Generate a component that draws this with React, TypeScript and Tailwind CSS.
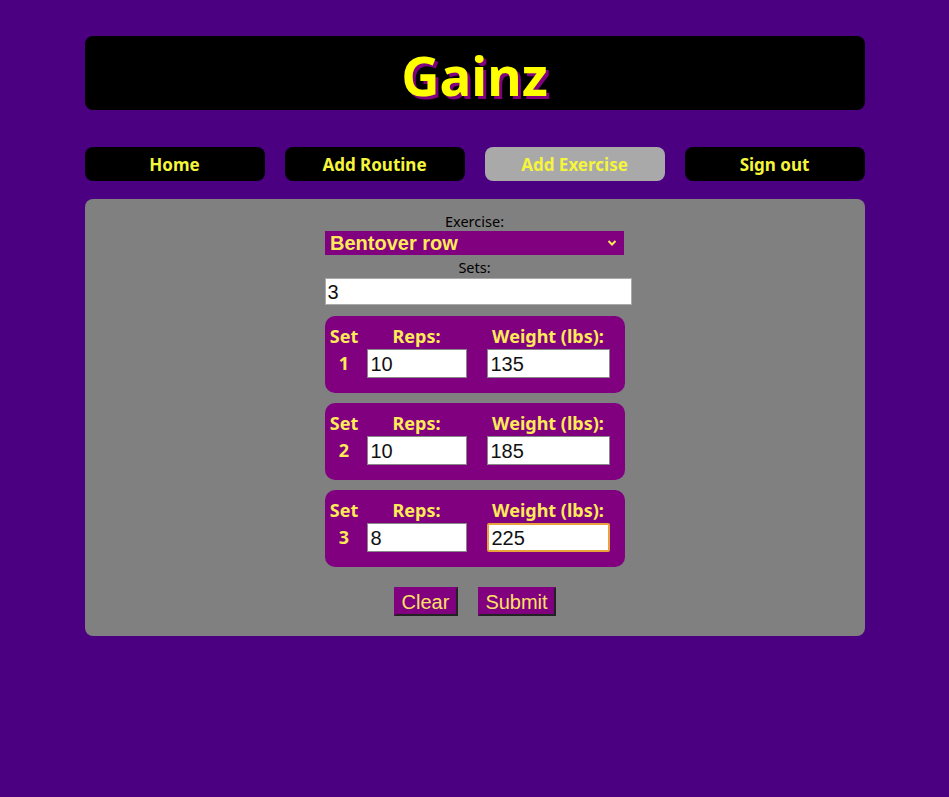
const sets = [
  { n: 1, reps: "10", weight: "135" },
  { n: 2, reps: "10", weight: "185" },
  { n: 3, reps: "8", weight: "225" },
];

const nav = ["Home", "Add Routine", "Add Exercise", "Sign out"];

export default function App() {
  return (
    <div className="min-h-[797px] bg-[#4b0082] pt-9 font-['Noto_Sans',sans-serif]">
      <div className="mx-auto w-[780px]">
        <header className="flex h-[74px] items-center justify-center rounded-lg bg-black pt-[4px]">
          <h1 className="text-[53px] font-bold leading-none text-[#ffff00] [text-shadow:3px_3px_0_#800080]">
            Gainz
          </h1>
        </header>

        <nav className="mt-[37px] flex gap-5">
          {nav.map((item) => (
            <button
              key={item}
              className={`h-[34px] w-[180px] rounded-lg pt-[2px] text-[17px] font-bold text-[#f5f53c] ${
                item === "Add Exercise" ? "bg-[#a9a9a9]" : "bg-black"
              }`}
            >
              {item}
            </button>
          ))}
        </nav>

        <main className="mt-[18px] flex h-[437px] justify-center rounded-lg bg-[#808080] pt-[12px]">
          <form className="flex w-[300px] flex-col items-center">
            <label className="text-[14.5px] leading-[20px] text-black">Exercise:</label>
            <div className="relative h-[24px] w-[299px] bg-[#800080]">
              <span className="absolute left-[5px] top-0 font-['Liberation_Sans',sans-serif] text-[20px] font-bold leading-[24px] text-[#ffeb57]">
                Bentover row
              </span>
              <svg className="absolute right-[7px] top-[8px]" width="10" height="8" viewBox="0 0 10 8">
                <path d="M1.5 2 L5 5.5 L8.5 2" fill="none" stroke="#ffeb57" strokeWidth="2" />
              </svg>
            </div>
            <label className="mt-[1px] text-[14.5px] leading-[22px] text-black">Sets:</label>
            <div className="flex h-[27px] w-[307px] items-center self-start border border-[#aaa] bg-white pl-[2px] font-['Liberation_Sans',sans-serif] text-[20px] text-[#111]">
              3
            </div>

            <div className="mt-[11px] flex flex-col gap-[10px] self-start">
              {sets.map((s) => (
                <div
                  key={s.n}
                  className="grid h-[77px] w-[300px] grid-cols-[42px_100px_20px_123px] grid-rows-[25px_29px] content-start rounded-[10px] bg-[#800080] pt-[8px] text-[18px] font-bold text-[#ffeb57]"
                >
                  <span className="pr-[3px] text-center leading-[25px]">Set</span>
                  <span className="text-center leading-[25px]">Reps:</span>
                  <span />
                  <span className="text-center leading-[25px] whitespace-nowrap">Weight (lbs):</span>
                  <span className="pr-[3px] text-center leading-[29px]">{s.n}</span>
                  <div className="flex items-center border border-[#888] bg-white pl-[3px] font-['Liberation_Sans',sans-serif] text-[20px] font-normal text-[#111]">
                    {s.reps}
                  </div>
                  <span />
                  <div
                    className={`flex items-center bg-white pl-[3px] font-['Liberation_Sans',sans-serif] text-[20px] font-normal text-[#111] ${
                      s.n === 3 ? "rounded-[2px] border-2 border-[#e8a33c]" : "border border-[#888]"
                    }`}
                  >
                    {s.weight}
                  </div>
                </div>
              ))}
            </div>

            <div className="mt-[20px] flex gap-5">
              <button
                type="button"
                className="h-[29px] w-[64px] border-2 border-[#800080] border-r-[#222] border-b-[#222] bg-[#800080] font-['Liberation_Sans',sans-serif] text-[20px] leading-none text-[#ffe066]"
              >
                Clear
              </button>
              <button
                type="button"
                className="h-[29px] w-[78px] border-2 border-[#800080] border-r-[#222] border-b-[#222] bg-[#800080] font-['Liberation_Sans',sans-serif] text-[20px] leading-none text-[#ffe066]"
              >
                Submit
              </button>
            </div>
          </form>
        </main>
      </div>
    </div>
  );
}
